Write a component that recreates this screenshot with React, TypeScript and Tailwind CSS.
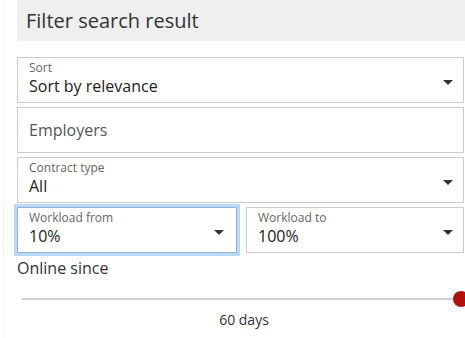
import React from "react";

const font = { fontFamily: '"Open Sans", "Liberation Sans", sans-serif' };

function Caret({ className = "" }: { className?: string }) {
  return (
    <div
      className={`shrink-0 mt-[5px] w-0 h-0 border-l-[5px] border-r-[5px] border-t-[5px] border-l-transparent border-r-transparent border-t-[#333] ${className}`}
    />
  );
}

function SelectBox({
  label,
  value,
  focused = false,
  caretClass = "mr-[10px]",
}: {
  label: string;
  value: string;
  focused?: boolean;
  caretClass?: string;
}) {
  return (
    <div
      className={`h-[46px] flex items-center border bg-white ${
        focused
          ? "border-[#93b2d4] shadow-[0_0_0_3px_#b9d9fb]"
          : "border-[#cbcbcb]"
      }`}
    >
      <div className="flex-1 min-w-0 pl-[11px] self-start pt-[3px]">
        <div className="text-[12px] leading-[14px] text-[#666]">{label}</div>
        <div className="text-[16px] leading-[20px] text-[#222] mt-[1px]">{value}</div>
      </div>
      <Caret className={caretClass} />
    </div>
  );
}

export default function App() {
  return (
    <div
      className="w-[465px] h-[338px] overflow-hidden bg-white flex"
      style={font}
    >
      <div className="w-[17px] shrink-0">
        <div className="ml-[3px] w-px h-full bg-[#efefef]" />
      </div>
      <div className="flex-1 min-w-0 flex flex-col">
        <div className="h-[41px] bg-[#efefef] flex items-center pl-[9px] text-[20px] text-[#333]">
          Filter search result
        </div>
        <div className="mt-[16px] mr-[1px] flex flex-col gap-[4px]">
          <SelectBox label="Sort" value="Sort by relevance" />
          <div className="h-[46px] flex items-center border border-[#cbcbcb] pl-[11px] text-[16px] text-[#555]">
            Employers
          </div>
          <SelectBox label="Contract type" value="All" />
          <div className="grid grid-cols-[220px_1fr] gap-[9px]">
            <SelectBox
              label="Workload from"
              value="10%"
              focused
              caretClass="mr-[12px]"
            />
            <SelectBox label="Workload to" value="100%" />
          </div>
        </div>
        <div className="mt-[3px] text-[16px] leading-[24px] text-[#333]">
          Online since
        </div>
        <div className="mt-[11px] ml-[5px] mr-[4px] h-[16px] relative">
          <div className="absolute left-0 right-0 top-[7px] h-[2px] bg-[#d0d0d0]" />
          <div className="absolute right-[-8px] top-0 w-[16px] h-[16px] rounded-full bg-[#b30e0e]" />
        </div>
        <div className="mt-[3px] pl-[6px] text-center text-[14px] leading-[20px] text-[#333]">
          60 days
        </div>
      </div>
    </div>
  );
}
